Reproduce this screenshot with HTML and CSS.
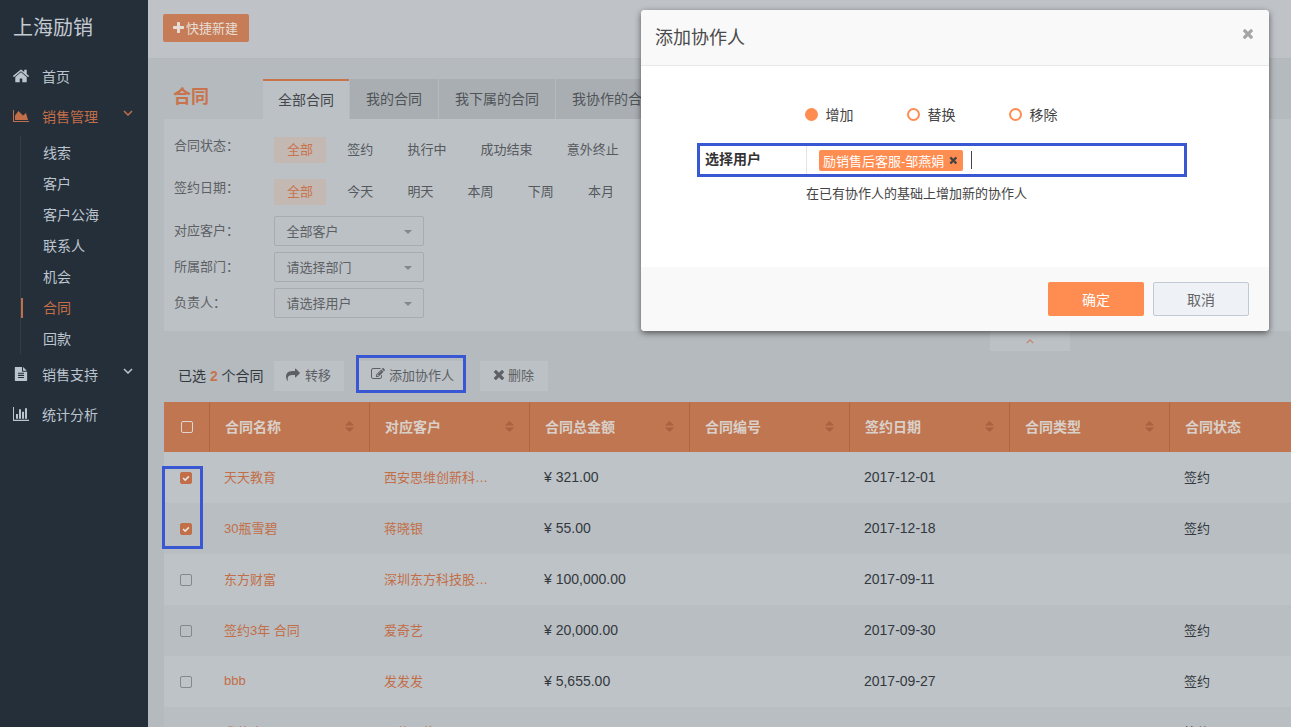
FILE: index.html
```html
<!DOCTYPE html>
<html lang="zh-CN">
<head>
    <meta charset="UTF-8">
    <meta name="viewport" content="width=device-width, initial-scale=1.0">
    <title>合同</title>
    <link rel="stylesheet" href="styles.css">
</head>
<body>
    <svg class="sprite" xmlns="http://www.w3.org/2000/svg">
        <symbol id="i-home" viewBox="90 250 1610 1290"><path d="M1472 992v480q0 26-19 45t-45 19h-384v-384h-256v384h-384q-26 0-45-19t-19-45v-480q0-1 .5-3t.5-3l575-474 575 474q1 2 1 6zm223-69l-62 74q-8 9-21 11h-3q-13 0-21-7l-692-577-692 577q-12 8-24 7-13-2-21-11l-62-74q-8-10-7-23.500t11-21.500l719-599q32-26 76-26t76 26l244 204v-195q0-14 9-23t23-9h192q14 0 23 9t9 23v408l219 182q10 8 11 21.500t-7 23.500z"/></symbol>
        <symbol id="i-area" viewBox="0 128 2048 1536"><path d="M2048 1536v128h-2048v-1536h128v1408h1920zm-384-1024l256 896h-1664v-576l448-576 576 576z"/></symbol>
        <symbol id="i-file" viewBox="128 40 1536 1752"><path d="M1596 476q14 14 28 36h-472v-472q22 14 36 28zm-476 164h544v1056q0 40-28 68t-68 28h-1344q-40 0-68-28t-28-68v-1600q0-40 28-68t68-28h800v544q0 40 28 68t68 28zm160 736v-64q0-14-9-23t-23-9h-704q-14 0-23 9t-9 23v64q0 14 9 23t23 9h704q14 0 23-9t9-23zm0-256v-64q0-14-9-23t-23-9h-704q-14 0-23 9t-9 23v64q0 14 9 23t23 9h704q14 0 23-9t9-23zm0-256v-64q0-14-9-23t-23-9h-704q-14 0-23 9t-9 23v64q0 14 9 23t23 9h704q14 0 23-9t9-23z"/></symbol>
        <symbol id="i-bars" viewBox="0 128 2048 1536" preserveAspectRatio="none"><path d="M640 896v512h-256v-512h256zm384-512v1024h-256v-1024h256zm1024 1152v128h-2048v-1536h128v1408h1920zm-640-896v768h-256v-768h256zm384-384v1152h-256v-1152h256z"/></symbol>
        <symbol id="i-plus" viewBox="192 128 1408 1408"><path d="M1600 736v192q0 40-28 68t-68 28h-416v416q0 40-28 68t-68 28h-192q-40 0-68-28t-28-68v-416h-416q-40 0-68-28t-28-68v-192q0-40 28-68t68-28h416v-416q0-40 28-68t68-28h192q40 0 68 28t28 68v416h416q40 0 68 28t28 68z"/></symbol>
        <symbol id="i-share" viewBox="0 0 1792 1792"><path d="M1792 640q0 26-19 45l-512 512q-19 19-45 19t-45-19-19-45v-256h-224q-98 0-175.500 6t-154 21.500-133 42.500-105.500 69.500-80 101-48.500 138.500-17.500 181q0 55 5 123 0 6 2.500 23.500t2.500 26.500q0 15-8.500 25t-23.500 10q-16 0-28-17-7-9-13-22t-13.500-30-10.500-24q-127-285-127-451 0-199 53-333 162-403 875-403h224v-256q0-26 19-45t45-19 45 19l512 512q19 19 19 45z"/></symbol>
        <symbol id="i-edit" viewBox="0 0 1792 1792"><path d="M888 1184l116-116-152-152-116 116v56h96v96h56zm440-720q-16-16-33 1l-350 350q-17 17-1 33t33-1l350-350q17-17 1-33zm80 594v190q0 119-84.500 203.500t-203.500 84.500h-832q-119 0-203.500-84.500t-84.500-203.500v-832q0-119 84.500-203.500t203.500-84.500h832q63 0 117 25 15 7 18 23 3 17-9 29l-49 49q-14 14-32 8-23-6-45-6h-832q-66 0-113 47t-47 113v832q0 66 47 113t113 47h832q66 0 113-47t47-113v-126q0-13 9-22l64-64q15-15 35-7t20 29zm-96-738l288 288-672 672h-288v-288zm444 132l-92 92-288-288 92-92q28-28 68-28t68 28l152 152q28 28 28 68t-28 68z"/></symbol>
        <symbol id="i-times" viewBox="191 246 1300 1300"><path d="M1490 1322q0 40-28 68l-136 136q-28 28-68 28t-68-28l-294-294-294 294q-28 28-68 28t-68-28l-136-136q-28-28-28-68t28-68l294-294-294-294q-28-28-28-68t28-68l136-136q28-28 68-28t68 28l294 294 294-294q28-28 68-28t68 28l136 136q28 28 28 68t-28 68l-294 294 294 294q28 28 28 68z"/></symbol>
        <symbol id="i-down" viewBox="0 0 10 6"><path d="M1 1l4 4 4-4" fill="none" stroke="currentColor" stroke-width="1.500"/></symbol>
        <symbol id="i-up" viewBox="0 0 10 6"><path d="M1 5l4-4 4 4" fill="none" stroke="currentColor" stroke-width="1.500"/></symbol>
        <symbol id="i-sort" viewBox="0 0 9 11"><path d="M4.500 0l4.500 4.500h-9zM4.500 11l-4.500-4.500h9z"/></symbol>
        <symbol id="i-check" viewBox="0 0 12 12"><path d="M2.500 6l2.500 2.500 4.500-4.500" fill="none" stroke="currentColor" stroke-width="2"/></symbol>
    </svg>

    <div class="app">
        <aside class="sidebar">
            <div class="brand">上海励销</div>
            <a class="nav-item"><svg class="nav-icon"><use href="#i-home"/></svg>首页</a>
            <a class="nav-item nav-item-open"><svg class="nav-icon"><use href="#i-area"/></svg>销售管理<svg class="nav-arrow"><use href="#i-down"/></svg></a>
            <ul class="sub-nav">
                <li>线索</li>
                <li>客户</li>
                <li>客户公海</li>
                <li>联系人</li>
                <li>机会</li>
                <li class="active">合同</li>
                <li>回款</li>
            </ul>
            <a class="nav-item"><svg class="nav-icon"><use href="#i-file"/></svg>销售支持<svg class="nav-arrow"><use href="#i-down"/></svg></a>
            <a class="nav-item"><svg class="nav-icon"><use href="#i-bars"/></svg>统计分析</a>
        </aside>

        <main class="main">
            <header class="topbar">
                <button class="btn-new"><svg class="btn-new-icon"><use href="#i-plus"/></svg>快捷新建</button>
            </header>

            <div class="content">
                <div class="page-head">
                    <h2 class="page-title">合同</h2>
                    <div class="tabs">
                        <div class="tab tab-active">全部合同</div>
                        <div class="tab">我的合同</div>
                        <div class="tab">我下属的合同</div>
                        <div class="tab">我协作的合同</div>
                    </div>
                </div>

                <section class="filters">
                    <div class="filter-row">
                        <span class="filter-label filter-label-top">合同状态<i class="colon">：</i></span>
                        <span class="opt opt-active">全部</span>
                        <span class="opt">签约</span>
                        <span class="opt">执行中</span>
                        <span class="opt">成功结束</span>
                        <span class="opt">意外终止</span>
                    </div>
                    <div class="filter-row">
                        <span class="filter-label filter-label-top">签约日期<i class="colon">：</i></span>
                        <span class="opt opt-active">全部</span>
                        <span class="opt">今天</span>
                        <span class="opt">明天</span>
                        <span class="opt">本周</span>
                        <span class="opt">下周</span>
                        <span class="opt">本月</span>
                    </div>
                    <div class="filter-row filter-row-select">
                        <span class="filter-label">对应客户<i class="colon">：</i></span>
                        <div class="select">全部客户</div>
                    </div>
                    <div class="filter-row filter-row-select">
                        <span class="filter-label">所属部门<i class="colon">：</i></span>
                        <div class="select">请选择部门</div>
                    </div>
                    <div class="filter-row filter-row-select">
                        <span class="filter-label">负责人<i class="colon">：</i></span>
                        <div class="select">请选择用户</div>
                    </div>
                </section>

                <div class="collapse-tab"><svg class="collapse-icon"><use href="#i-up"/></svg></div>

                <div class="actions">
                    <span class="selected-count">已选 <b>2</b> 个合同</span>
                    <button class="btn-action"><svg class="btn-icon btn-icon-share"><use href="#i-share"/></svg>转移</button>
                    <div class="mark-action">
                        <button class="btn-action btn-action-wide"><svg class="btn-icon"><use href="#i-edit"/></svg>添加协作人</button>
                    </div>
                    <button class="btn-action btn-action-del"><svg class="btn-icon btn-icon-del"><use href="#i-times"/></svg>删除</button>
                </div>

                <div class="table-wrap">
                    <table class="contracts">
                        <colgroup>
                            <col class="col-check">
                            <col span="7" class="col-data">
                        </colgroup>
                        <thead>
                            <tr>
                                <th class="cell-check"><span class="checkbox checkbox-head"></span></th>
                                <th>合同名称<svg class="sort"><use href="#i-sort"/></svg></th>
                                <th>对应客户<svg class="sort"><use href="#i-sort"/></svg></th>
                                <th>合同总金额<svg class="sort"><use href="#i-sort"/></svg></th>
                                <th>合同编号<svg class="sort"><use href="#i-sort"/></svg></th>
                                <th>签约日期<svg class="sort"><use href="#i-sort"/></svg></th>
                                <th>合同类型<svg class="sort"><use href="#i-sort"/></svg></th>
                                <th>合同状态</th>
                            </tr>
                        </thead>
                        <tbody>
                            <tr>
                                <td class="cell-check"><span class="checkbox checkbox-on"><svg><use href="#i-check"/></svg></span></td>
                                <td class="link">天天教育</td>
                                <td class="link"><span class="clip">西安思维创新科技有限公司</span></td>
                                <td class="num">¥ 321.00</td>
                                <td></td>
                                <td class="num">2017-12-01</td>
                                <td></td>
                                <td>签约</td>
                            </tr>
                            <tr>
                                <td class="cell-check"><span class="checkbox checkbox-on"><svg><use href="#i-check"/></svg></span></td>
                                <td class="link">30瓶雪碧</td>
                                <td class="link">蒋晓银</td>
                                <td class="num">¥ 55.00</td>
                                <td></td>
                                <td class="num">2017-12-18</td>
                                <td></td>
                                <td>签约</td>
                            </tr>
                            <tr>
                                <td class="cell-check"><span class="checkbox"></span></td>
                                <td class="link">东方财富</td>
                                <td class="link"><span class="clip">深圳东方科技股份有限公司</span></td>
                                <td class="num">¥ 100,000.00</td>
                                <td></td>
                                <td class="num">2017-09-11</td>
                                <td></td>
                                <td></td>
                            </tr>
                            <tr>
                                <td class="cell-check"><span class="checkbox"></span></td>
                                <td class="link">签约3年 合同</td>
                                <td class="link">爱奇艺</td>
                                <td class="num">¥ 20,000.00</td>
                                <td></td>
                                <td class="num">2017-09-30</td>
                                <td></td>
                                <td>签约</td>
                            </tr>
                            <tr>
                                <td class="cell-check"><span class="checkbox"></span></td>
                                <td class="link">bbb</td>
                                <td class="link">发发发</td>
                                <td class="num">¥ 5,655.00</td>
                                <td></td>
                                <td class="num">2017-09-27</td>
                                <td></td>
                                <td>签约</td>
                            </tr>
                            <tr>
                                <td class="cell-check"><span class="checkbox"></span></td>
                                <td class="link">我的合同一</td>
                                <td class="link">易信网络</td>
                                <td></td>
                                <td></td>
                                <td></td>
                                <td></td>
                                <td>签约</td>
                            </tr>
                        </tbody>
                    </table>
                </div>
            </div>
        </main>

        <div class="mark-checks"></div>

        <div class="modal">
            <div class="modal-head">
                <h4 class="modal-title">添加协作人</h4>
                <svg class="modal-close"><use href="#i-times"/></svg>
            </div>
            <div class="modal-body">
                <div class="radios">
                    <span class="radio radio-on">增加</span>
                    <span class="radio">替换</span>
                    <span class="radio">移除</span>
                </div>
                <div class="user-field">
                    <label class="user-label">选择用户</label>
                    <div class="user-input">
                        <span class="user-tag">励销售后客服-邹燕娟<svg class="user-tag-x"><use href="#i-times"/></svg></span>
                        <span class="caret"></span>
                    </div>
                </div>
                <p class="help">在已有协作人的基础上增加新的协作人</p>
            </div>
            <div class="modal-foot">
                <button class="btn-ok">确定</button>
                <button class="btn-cancel">取消</button>
            </div>
        </div>
    </div>
</body>
</html>
```

FILE: styles.css
```css
*, *::before, *::after {
    box-sizing: border-box;
}
html, body {
    height: 100%;
    margin: 0;
    overflow: hidden;
}
body {
    font-family: "Liberation Sans", "Noto Sans CJK SC", sans-serif;
    font-size: 13px;
    color: #33383e;
    background-color: #b5babe;
}
button {
    font: inherit;
    cursor: pointer;
}
.sprite {
    display: none;
}
.app {
    position: relative;
    display: flex;
    height: 727px;
    overflow: hidden;
}

/* sidebar */
.sidebar {
    flex: 0 0 148px;
    background-color: #252f3a;
    color: #bcc5ce;
    font-size: 14px;
}
.brand {
    height: 56px;
    padding-left: 13px;
    font-size: 20px;
    line-height: 56px;
    color: #c3cad1;
}
.nav-item {
    display: flex;
    align-items: center;
    height: 40px;
    padding: 0 15px 0 13px;
}
.nav-item-open {
    color: #c26e48;
}
.nav-icon {
    flex: none;
    width: 16px;
    height: 14px;
    margin-right: 13px;
    fill: currentColor;
}
.nav-arrow {
    flex: none;
    width: 10px;
    height: 6px;
    margin: -7px 0 0 auto;
}
.sub-nav {
    list-style: none;
    height: 218px;
    margin: 0 0 0 20px;
    padding: 2px 0 0;
    border-left: 1px solid #323d4a;
}
.sub-nav li {
    position: relative;
    height: 31px;
    padding-left: 22px;
    line-height: 31px;
}
.sub-nav li.active {
    color: #c26e48;
}
.sub-nav li.active::before {
    content: "";
    position: absolute;
    left: 0;
    top: 5px;
    width: 2px;
    height: 20px;
    background-color: #c26e48;
}

/* top bar */
.main {
    flex: 1;
    min-width: 0;
    overflow: hidden;
}
.topbar {
    height: 59px;
    padding: 14px 0 0 15px;
    background-color: #bfc3c7;
    border-bottom: 1px solid #b3b8bc;
}
.btn-new {
    display: flex;
    align-items: center;
    width: 86px;
    height: 28px;
    padding: 0 0 2px 10px;
    border: 0;
    border-radius: 2px;
    background-color: #c67c57;
    color: #e6dcd5;
}
.btn-new-icon {
    width: 11px;
    height: 11px;
    margin-right: 2px;
    fill: currentColor;
}

/* page head and tabs */
.content {
    padding-left: 16px;
}
.page-head {
    display: flex;
    align-items: flex-end;
    height: 60px;
}
.page-title {
    width: 99px;
    margin: 0 0 10px;
    padding-left: 9px;
    font-size: 18px;
    line-height: 24px;
    color: #c8734c;
}
.tabs {
    display: flex;
    gap: 1px;
}
.tab {
    height: 40px;
    padding: 0 16px;
    background-color: #a9aeb2;
    font-size: 14px;
    line-height: 41px;
    color: #505458;
    white-space: nowrap;
}
.tab-active {
    padding: 0 15px;
    border-top: 2px solid #c8734c;
    background-color: #bcc1c5;
    line-height: 38px;
    color: #44484c;
}

/* filters */
.filters {
    height: 212px;
    padding-top: 18px;
    background-color: #bcc1c5;
}
.filter-row {
    display: flex;
    align-items: flex-start;
    gap: 8.200px;
    margin-bottom: 16px;
}
.filter-row-select {
    gap: 0;
    margin-bottom: 6px;
}
.filter-row:nth-child(2) {
    margin-bottom: 11px;
}
.filter-label {
    flex: none;
    width: 110px;
    padding-left: 10px;
    line-height: 27px;
    color: #5c6064;
}
.filter-label-top {
    width: 101.800px;
    line-height: 15px;
}
.colon {
    font-family: "Noto Sans CJK TC", sans-serif;
    font-style: normal;
}
.opt {
    height: 26px;
    padding: 0 13px;
    line-height: 26px;
    color: #55595d;
    white-space: nowrap;
}
.opt-active {
    background-color: #c4b8b3;
    color: #c8734c;
}
.select {
    position: relative;
    width: 150px;
    height: 30px;
    padding-left: 11.500px;
    border: 1px solid #a7acb1;
    border-radius: 2px;
    line-height: 29px;
    color: #5c6064;
}
.select::after {
    content: "";
    position: absolute;
    right: 11px;
    top: 13px;
    border-style: solid;
    border-width: 4px 4px 0;
    border-color: #84888c transparent transparent;
}
.collapse-tab {
    display: flex;
    justify-content: center;
    align-items: center;
    width: 80px;
    height: 20px;
    margin-left: 826px;
    background-color: #bcc1c5;
    color: #c8806a;
}
.collapse-icon {
    width: 8px;
    height: 5px;
}

/* action row */
.actions {
    display: flex;
    align-items: flex-start;
    height: 51px;
    padding-top: 4px;
}
.selected-count {
    width: 110px;
    padding-left: 14px;
    margin-top: 6px;
    font-size: 14px;
    line-height: 30px;
    color: #33383e;
}
.selected-count b {
    color: #c8734c;
}
.btn-action {
    display: flex;
    align-items: center;
    width: 70px;
    height: 30px;
    margin-top: 6px;
    padding: 0 0 3px 12px;
    border: 0;
    background-color: #bcc1c5;
    color: #5c6064;
}
.btn-action-wide {
    width: 104px;
    height: 29px;
    margin: 0;
}
.btn-action-del {
    width: 68px;
    margin-left: 14px;
    padding-left: 13px;
}
.btn-icon {
    width: 14px;
    height: 14px;
    margin-right: 4px;
    fill: currentColor;
}
.btn-icon-share {
    margin-right: 5px;
}
.btn-icon-del {
    width: 11px;
    height: 11px;
}
.mark-action {
    width: 110px;
    height: 38px;
    margin-left: 12px;
    padding-top: 3px;
    border: 3px solid #3a57d3;
}

/* table */
.contracts {
    width: 1166px;
    border-collapse: separate;
    border-spacing: 0;
    table-layout: fixed;
}
.col-check {
    width: 46px;
}
.col-data {
    width: 160px;
}
.contracts th {
    position: relative;
    height: 50px;
    padding: 0 0 2px 15px;
    border-right: 1px solid #b2653f;
    background-color: #c07650;
    color: #d9d0ca;
    font-size: 14px;
    text-align: left;
}
.contracts th:last-child {
    border-right: 0;
}
.contracts th.cell-check {
    padding: 0 0 2px;
    text-align: center;
}
.contracts td.cell-check {
    padding: 0 2px 1px 0;
    text-align: center;
}
.contracts td {
    height: 51px;
    padding: 0 0 2px 14px;
    white-space: nowrap;
}
.contracts tbody tr:nth-child(odd) {
    background-color: #bec3c7;
}
.contracts tbody tr:nth-child(even) {
    background-color: #b9bec2;
}
.contracts td.link {
    color: #c26e48;
}
.contracts td.num {
    font-size: 14px;
}
.clip {
    display: block;
    max-width: 110px;
    overflow: hidden;
    text-overflow: ellipsis;
}
.sort {
    position: absolute;
    right: 15px;
    top: 19px;
    width: 9px;
    height: 11px;
    fill: #a9613f;
}
.checkbox {
    display: inline-flex;
    width: 12px;
    height: 12px;
    border: 1px solid #83888c;
    border-radius: 2px;
    vertical-align: middle;
}
.checkbox-head {
    border-color: #e0d6cf;
}
.checkbox-on {
    border-color: #c26e48;
    background-color: #c26e48;
    color: #e9e2dd;
}
.checkbox-on svg {
    width: 10px;
    height: 10px;
}

/* blue mark round the two ticked rows */
.mark-checks {
    position: absolute;
    left: 162px;
    top: 466px;
    width: 41px;
    height: 83px;
    border: 3px solid #3a57d3;
}

/* dialog */
.modal {
    position: absolute;
    left: 641px;
    top: 10px;
    width: 628px;
    height: 321px;
    border-radius: 4px;
    overflow: hidden;
    background-color: #fff;
    box-shadow: 0 2px 6px rgba(0, 0, 0, 0.55);
}
.modal-head {
    display: flex;
    justify-content: space-between;
    height: 56px;
    padding: 0 16px 0 14px;
    border-bottom: 1px solid #e8e8e8;
    background-color: #f9f9f9;
}
.modal-title {
    margin: 0;
    font-size: 18px;
    font-weight: normal;
    line-height: 56px;
    color: #4a4a4a;
}
.modal-close {
    width: 11px;
    height: 11px;
    margin-top: 18px;
    fill: #a5a5a5;
}
.modal-body {
    height: 201px;
    padding-top: 38px;
}
.radios {
    display: flex;
    height: 20px;
    margin-left: 164px;
}
.radio {
    display: flex;
    align-items: center;
    width: 102px;
    font-size: 14px;
    color: #444;
}
.radio::before {
    content: "";
    width: 13px;
    height: 13px;
    margin-right: 7.500px;
    border: 2px solid #ff8c50;
    border-radius: 50%;
}
.radio-on::before {
    background-color: #ff8c50;
}
.user-field {
    display: flex;
    width: 490px;
    height: 34px;
    margin: 19px 0 0 56px;
    border: 3px solid #3a57d3;
}
.user-label {
    width: 106px;
    padding-left: 5px;
    font-size: 14px;
    font-weight: bold;
    line-height: 27px;
    color: #333;
}
.user-input {
    display: flex;
    align-items: center;
    flex: 1;
    padding-left: 12px;
    border-left: 1px solid #e5e5e5;
}
.user-tag {
    display: flex;
    align-items: center;
    width: 144px;
    height: 21px;
    padding-left: 4px;
    border-radius: 2px;
    background-color: #ff8c50;
    color: #fff;
    white-space: nowrap;
}
.user-tag-x {
    width: 8px;
    height: 8px;
    margin-left: 5px;
    fill: #444;
}
.caret {
    width: 1px;
    height: 18px;
    margin-left: 8px;
    background-color: #444;
}
.help {
    margin: 8px 0 0 165px;
    line-height: 18px;
    color: #444;
}
.modal-foot {
    display: flex;
    gap: 9px;
    justify-content: flex-end;
    height: 64px;
    padding: 15px 20px 0 0;
    background-color: #f9f9f9;
}
.btn-ok,
.btn-cancel {
    width: 96px;
    height: 34px;
    border-radius: 2px;
    font-size: 14px;
}
.btn-ok {
    border: 0;
    background-color: #ff8c50;
    color: #fff;
}
.btn-cancel {
    border: 1px solid #bfcad5;
    background-color: #eef1f6;
    color: #666;
}
```
